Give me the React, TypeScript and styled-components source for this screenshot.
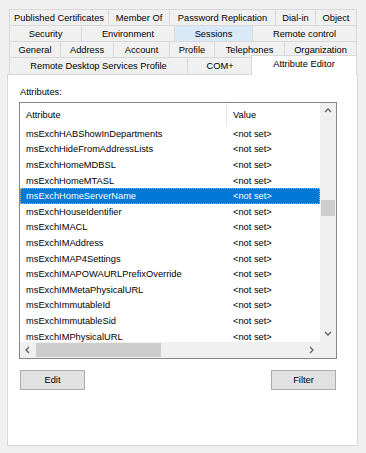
import React from "react";
import styled, { createGlobalStyle } from "styled-components";

const GlobalStyle = createGlobalStyle`
  html, body {
    margin: 0;
    padding: 0;
    background: #f0f0f0;
  }
  body {
    font-family: "Liberation Sans", Arial, sans-serif;
    font-size: 9.3px;
    color: #000;
  }
`;

interface TabDef {
  label: string;
  w: number;
  hot?: boolean;
  active?: boolean;
}

// tab rows, top to bottom, widths as laid out by the property sheet
const tabRows: { h: number; tabs: TabDef[] }[] = [
  {
    h: 16,
    tabs: [
      { label: "Published Certificates", w: 100 },
      { label: "Member Of", w: 61 },
      { label: "Password Replication", w: 106 },
      { label: "Dial-in", w: 40 },
      { label: "Object", w: 41 },
    ],
  },
  {
    h: 16,
    tabs: [
      { label: "Security", w: 73 },
      { label: "Environment", w: 93 },
      { label: "Sessions", w: 78, hot: true },
      { label: "Remote control", w: 104 },
    ],
  },
  {
    h: 16,
    tabs: [
      { label: "General", w: 52 },
      { label: "Address", w: 53 },
      { label: "Account", w: 56 },
      { label: "Profile", w: 45 },
      { label: "Telephones", w: 70 },
      { label: "Organization", w: 72 },
    ],
  },
  {
    h: 17,
    tabs: [
      { label: "Remote Desktop Services Profile", w: 179 },
      { label: "COM+", w: 65 },
      { label: "Attribute Editor", w: 104, active: true },
    ],
  },
];

const attributes = [
  "msExchHABShowInDepartments",
  "msExchHideFromAddressLists",
  "msExchHomeMDBSL",
  "msExchHomeMTASL",
  "msExchHomeServerName",
  "msExchHouseIdentifier",
  "msExchIMACL",
  "msExchIMAddress",
  "msExchIMAP4Settings",
  "msExchIMAPOWAURLPrefixOverride",
  "msExchIMMetaPhysicalURL",
  "msExchImmutableId",
  "msExchImmutableSid",
  "msExchIMPhysicalURL",
];

const selectedIndex = 4;

const Window = styled.div`
  width: 366px;
  height: 453px;
  box-sizing: border-box;
  padding: 9px 8px 0 7px;
  display: flex;
  flex-direction: column;
`;

const TabStrip = styled.div`
  display: flex;
  flex-direction: column;
  margin: 0 1px 0 2px;
`;

const TabRow = styled.div<{ $h: number }>`
  display: flex;
  height: ${(p) => p.$h}px;
  align-items: flex-end;
`;

const Tab = styled.div<{ $w: number; $hot?: boolean; $active?: boolean }>`
  box-sizing: border-box;
  width: ${(p) => p.$w}px;
  height: 100%;
  display: flex;
  align-items: center;
  justify-content: center;
  white-space: nowrap;
  border-top: 1px solid #d9d9d9;
  border-right: 1px solid #d9d9d9;
  background: ${(p) => (p.$hot ? "#d9e9f8" : "#f0f0f0")};

  &:first-child {
    border-left: 1px solid #d9d9d9;
  }

  ${(p) =>
    p.$active &&
    `
    position: relative;
    z-index: 1;
    background: #fff;
    height: calc(100% + 3px);
    margin: -2px 0 -1px -2px;
    width: ${p.$w + 2}px;
    border-left: 1px solid #d9d9d9;
    padding-bottom: 3px;
  `}
`;

const Panel = styled.div`
  box-sizing: border-box;
  height: 372px;
  background: #fff;
  border: 1px solid #d9d9d9;
  padding: 11px 20px 0 11px;
  display: flex;
  flex-direction: column;
`;

const Label = styled.div`
  line-height: 13px;
  height: 13px;
  padding-left: 1px;
`;

const ListBox = styled.div`
  box-sizing: border-box;
  margin-top: 3px;
  width: 318px;
  height: 257px;
  border: 1px solid #828790;
  display: grid;
  grid-template-columns: 1fr 16px;
  grid-template-rows: 1fr 16px;
`;

const ListContent = styled.div`
  overflow: hidden;
  background: #fff;
`;

const HeaderRow = styled.div`
  display: flex;
  height: 23px;
  align-items: center;
`;

const HeaderCell = styled.div<{ $w?: number }>`
  box-sizing: border-box;
  ${(p) => (p.$w ? `width: ${p.$w}px; border-right: 1px solid #e5e5e5;` : "flex: 1;")}
  height: 100%;
  display: flex;
  align-items: center;
  padding: 1px 0 0 6px;
`;

const Row = styled.div<{ $selected?: boolean }>`
  display: flex;
  height: 15.6px;
  align-items: center;
  white-space: nowrap;
  background: ${(p) => (p.$selected ? "#0078d7" : "transparent")};
  color: ${(p) => (p.$selected ? "#fff" : "#000")};
  ${(p) => p.$selected && "outline: 1px dotted #e8a85a; outline-offset: -1px;"}
`;

const Cell = styled.div<{ $w?: number }>`
  box-sizing: border-box;
  ${(p) => (p.$w ? `width: ${p.$w}px;` : "flex: 1;")}
  padding-left: 6px;
  overflow: hidden;
`;

const VScroll = styled.div`
  background: #f0f0f0;
  display: flex;
  flex-direction: column;
`;

const HScroll = styled.div`
  background: #f0f0f0;
  display: flex;
`;

const Corner = styled.div`
  background: #f0f0f0;
`;

const ArrowBox = styled.div`
  width: 16px;
  height: 16px;
  flex: none;
  display: flex;
  align-items: center;
  justify-content: center;
`;

const VTrack = styled.div`
  flex: 1;
  display: flex;
  flex-direction: column;
  align-items: center;
`;

const HTrack = styled.div`
  flex: 1;
  display: flex;
  align-items: center;
`;

const Thumb = styled.div<{ $vertical?: boolean }>`
  background: #cdcdcd;
  ${(p) => (p.$vertical ? "width: 14px; height: 16px;" : "height: 14px; width: 125px;")}
`;

const ButtonRow = styled.div`
  display: flex;
  justify-content: space-between;
  margin-top: 11px;
  width: 318px;
  padding: 0 1px;
  box-sizing: border-box;
`;

const Button = styled.button`
  width: 65px;
  height: 20px;
  box-sizing: border-box;
  background: #e1e1e1;
  border: 1px solid #adadad;
  font: inherit;
  color: #000;
  padding: 0;
`;

const Chevron = ({ dir }: { dir: "up" | "down" | "left" | "right" }) => {
  const pts = {
    up: "1,5 4,2 7,5",
    down: "1,2 4,5 7,2",
    left: "5,1 2,4 5,7",
    right: "2,1 5,4 2,7",
  }[dir];
  return (
    <svg width="8" height="8" viewBox="0 0 8 8">
      <polyline points={pts} fill="none" stroke="#606060" strokeWidth="1.3" />
    </svg>
  );
};

export default function App() {
  return (
    <>
      <GlobalStyle />
      <Window>
        <TabStrip>
          {tabRows.map((row, i) => (
            <TabRow key={i} $h={row.h}>
              {row.tabs.map((t) => (
                <Tab key={t.label} $w={t.w} $hot={t.hot} $active={t.active}>
                  {t.label}
                </Tab>
              ))}
            </TabRow>
          ))}
        </TabStrip>

        <Panel>
          <Label>Attributes:</Label>
          <ListBox>
            <ListContent>
              <HeaderRow>
                <HeaderCell $w={207}>Attribute</HeaderCell>
                <HeaderCell>Value</HeaderCell>
              </HeaderRow>
              {attributes.map((name, i) => (
                <Row key={name} $selected={i === selectedIndex}>
                  <Cell $w={207}>{name}</Cell>
                  <Cell>&lt;not set&gt;</Cell>
                </Row>
              ))}
            </ListContent>
            <VScroll>
              <ArrowBox>
                <Chevron dir="up" />
              </ArrowBox>
              <VTrack>
                <Thumb $vertical style={{ marginTop: 81 }} />
              </VTrack>
              <ArrowBox>
                <Chevron dir="down" />
              </ArrowBox>
            </VScroll>
            <HScroll>
              <ArrowBox>
                <Chevron dir="left" />
              </ArrowBox>
              <HTrack>
                <Thumb />
              </HTrack>
              <ArrowBox>
                <Chevron dir="right" />
              </ArrowBox>
            </HScroll>
            <Corner />
          </ListBox>
          <ButtonRow>
            <Button>Edit</Button>
            <Button>Filter</Button>
          </ButtonRow>
        </Panel>
      </Window>
    </>
  );
}
